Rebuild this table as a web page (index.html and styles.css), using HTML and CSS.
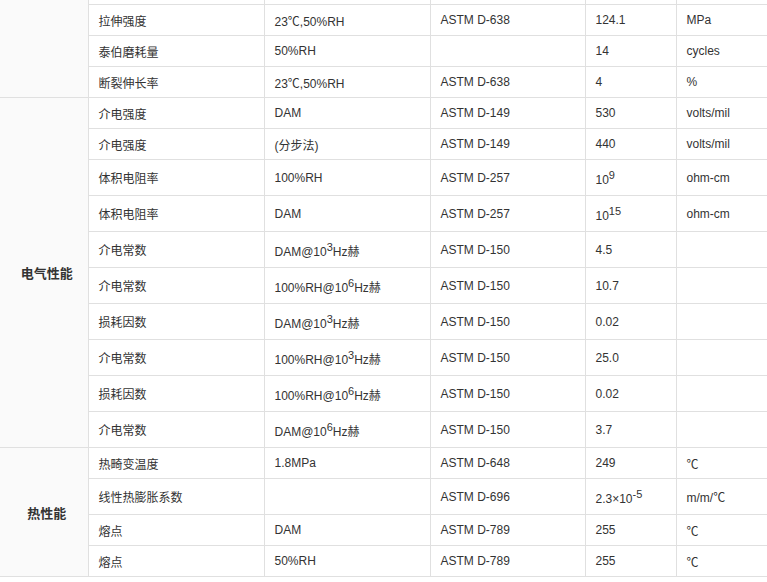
FILE: index.html
```html
<!DOCTYPE html>
<html lang="zh">
<head>
<meta charset="utf-8">
<title>性能参数</title>
<link rel="stylesheet" href="styles.css">
</head>
<body>
<table class="spec">
  <colgroup>
    <col class="c1"><col class="c2"><col class="c3"><col class="c4"><col class="c5"><col class="c6">
  </colgroup>
  <tbody>
    <tr class="stub">
      <td class="group" rowspan="4"></td>
      <td></td><td></td><td></td><td></td><td class="last"></td>
    </tr>
    <tr><td>拉伸强度</td><td>23℃,50%RH</td><td>ASTM D-638</td><td>124.1</td><td class="last">MPa</td></tr>
    <tr><td>泰伯磨耗量</td><td>50%RH</td><td></td><td>14</td><td class="last">cycles</td></tr>
    <tr><td>断裂伸长率</td><td>23℃,50%RH</td><td>ASTM D-638</td><td>4</td><td class="last">%</td></tr>

    <tr>
      <td class="group" rowspan="10">电气性能</td>
      <td>介电强度</td><td>DAM</td><td>ASTM D-149</td><td>530</td><td class="last">volts/mil</td>
    </tr>
    <tr><td>介电强度</td><td>(分步法)</td><td>ASTM D-149</td><td>440</td><td class="last">volts/mil</td></tr>
    <tr class="tall"><td>体积电阻率</td><td>100%RH</td><td>ASTM D-257</td><td>10<sup>9</sup></td><td class="last">ohm-cm</td></tr>
    <tr class="tall"><td>体积电阻率</td><td>DAM</td><td>ASTM D-257</td><td>10<sup>15</sup></td><td class="last">ohm-cm</td></tr>
    <tr class="tall"><td>介电常数</td><td>DAM@10<sup>3</sup>Hz赫</td><td>ASTM D-150</td><td>4.5</td><td class="last"></td></tr>
    <tr class="tall"><td>介电常数</td><td>100%RH@10<sup>6</sup>Hz赫</td><td>ASTM D-150</td><td>10.7</td><td class="last"></td></tr>
    <tr class="tall"><td>损耗因数</td><td>DAM@10<sup>3</sup>Hz赫</td><td>ASTM D-150</td><td>0.02</td><td class="last"></td></tr>
    <tr class="tall"><td>介电常数</td><td>100%RH@10<sup>3</sup>Hz赫</td><td>ASTM D-150</td><td>25.0</td><td class="last"></td></tr>
    <tr class="tall"><td>损耗因数</td><td>100%RH@10<sup>6</sup>Hz赫</td><td>ASTM D-150</td><td>0.02</td><td class="last"></td></tr>
    <tr class="tall"><td>介电常数</td><td>DAM@10<sup>6</sup>Hz赫</td><td>ASTM D-150</td><td>3.7</td><td class="last"></td></tr>

    <tr>
      <td class="group" rowspan="4">热性能</td>
      <td>热畸变温度</td><td>1.8MPa</td><td>ASTM D-648</td><td>249</td><td class="last">℃</td>
    </tr>
    <tr class="tall"><td>线性热膨胀系数</td><td></td><td>ASTM D-696</td><td>2.3×10<sup>-5</sup></td><td class="last">m/m/℃</td></tr>
    <tr><td>熔点</td><td>DAM</td><td>ASTM D-789</td><td>255</td><td class="last">℃</td></tr>
    <tr><td>熔点</td><td>50%RH</td><td>ASTM D-789</td><td>255</td><td class="last">℃</td></tr>
  </tbody>
</table>
</body>
</html>
```
FILE: styles.css
```css
html, body {
  margin: 0;
  padding: 0;
  background: #ffffff;
  overflow: hidden;
}

.spec {
  border-collapse: collapse;
  table-layout: fixed;
  width: 767px;
  font-family: "Liberation Sans", "Noto Sans CJK SC", sans-serif;
  font-size: 12px;
  color: #333333;
}

.c1 { width: 88px; }
.c2 { width: 176px; }
.c3 { width: 166px; }
.c4 { width: 155px; }
.c5 { width: 91px; }
.c6 { width: 91px; }

.spec td {
  border: 1px solid #e0e0e0;
  padding: 0 10px;
  height: 30px;
  vertical-align: middle;
  text-align: left;
  white-space: nowrap;
}

.spec tr.tall td {
  height: 35px;
}

.spec tr.stub td {
  height: 4px;
  border-top: none;
}

.spec td.group {
  background: #fafafa;
  border-left: none;
  text-align: center;
  padding: 0 0 0 6px;
  font-family: "Noto Sans CJK SC", sans-serif;
  font-weight: bold;
  font-size: 13px;
  color: #333333;
}

.spec td.last {
  border-right: none;
}

.spec sup {
  font-size: 11px;
  vertical-align: super;
}
```
